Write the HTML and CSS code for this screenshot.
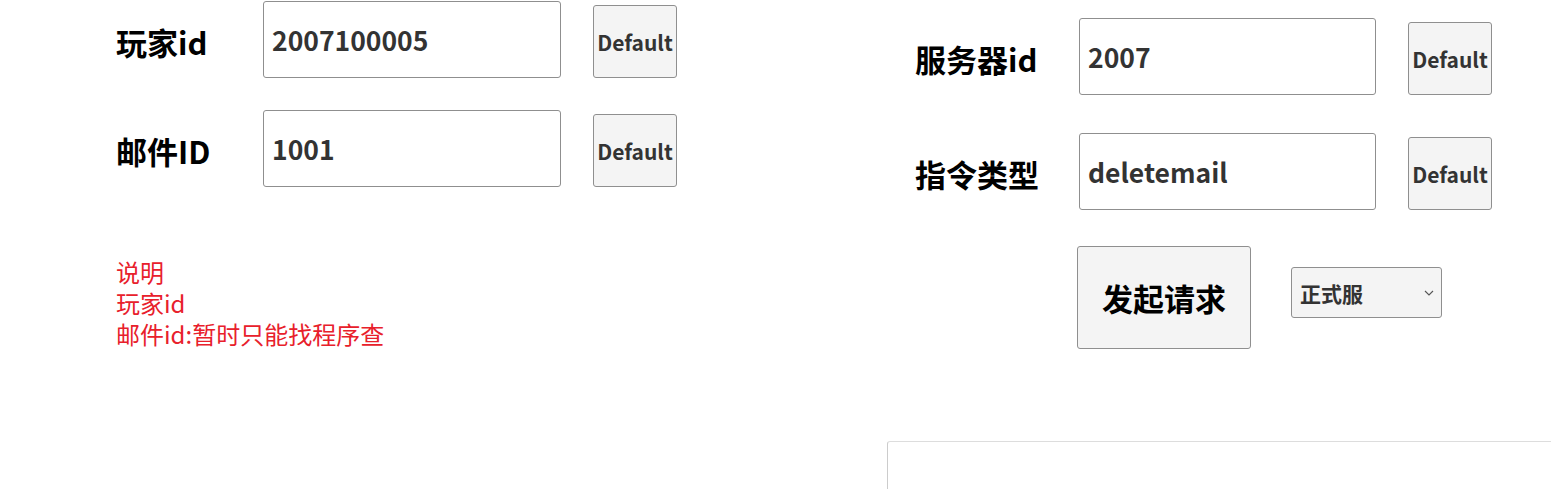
FILE: index.html
```html
<!DOCTYPE html>
<html lang="zh-CN">
<head>
<meta charset="utf-8">
<title>邮件删除</title>
<link rel="stylesheet" href="styles.css">
</head>
<body>
<div class="page">
  <section class="left">
    <div class="row">
      <label class="lbl">玩家id</label>
      <input class="field" type="text" value="2007100005">
      <button class="def">Default</button>
    </div>
    <div class="row">
      <label class="lbl">邮件ID</label>
      <input class="field" type="text" value="1001">
      <button class="def">Default</button>
    </div>
    <div class="note">
      <div class="note-line">说明</div>
      <div class="note-line">玩家id</div>
      <div class="note-line">邮件id:暂时只能找程序查</div>
    </div>
  </section>
  <section class="right">
    <div class="rows">
      <div class="row">
        <label class="lbl lbl-r">服务器id</label>
        <input class="field field-r" type="text" value="2007">
        <button class="def">Default</button>
      </div>
      <div class="row">
        <label class="lbl lbl-r">指令类型</label>
        <input class="field field-r" type="text" value="deletemail">
        <button class="def">Default</button>
      </div>
      <div class="actions">
        <button class="submit">发起请求</button>
        <div class="sel-wrap">
          <select class="sel"><option>正式服</option><option>测试服</option></select>
          <svg class="chev" width="10" height="6" viewBox="0 0 10 6"><path d="M1 1 L5 5 L9 1" fill="none" stroke="#555" stroke-width="1.1"/></svg>
        </div>
      </div>
    </div>
    <div class="result"></div>
  </section>
</div>
</body>
</html>
```

FILE: styles.css
```css
* { box-sizing: border-box; }
html, body { margin: 0; padding: 0; background: #fff; }
body {
  font-family: "Noto Sans CJK SC", "Noto Sans", sans-serif;
  width: 1551px;
  height: 489px;
  overflow: hidden;
}
.page {
  display: flex;
  align-items: flex-start;
}
.left {
  width: 887px;
  flex: none;
  padding: 1px 0 0 116px;
  display: flex;
  flex-direction: column;
  gap: 32px;
}
.right {
  flex: 1;
  display: flex;
  flex-direction: column;
  padding-top: 18px;
}
.rows {
  padding-left: 28px;
  display: flex;
  flex-direction: column;
  gap: 38px;
}
.row {
  display: flex;
  align-items: flex-end;
}
.lbl {
  width: 147px;
  flex: none;
  font-size: 31px;
  font-weight: 700;
  color: #000;
  line-height: 1;
  margin-bottom: 21px;
}
.lbl-r { width: 164px; }
.field {
  width: 298px;
  height: 77px;
  flex: none;
  border: 1px solid #8f8f8f;
  border-radius: 3px;
  padding: 0 8px;
  font-family: "Noto Sans CJK SC", "Noto Sans", sans-serif;
  font-size: 26.5px;
  font-weight: 700;
  color: #333;
  background: #fff;
  outline: none;
}
.field-r { width: 297px; }
.def {
  margin-left: 32px;
  width: 84px;
  height: 73px;
  flex: none;
  padding: 0;
  border: 1px solid #8f8f8f;
  border-radius: 3px;
  background: #f4f4f4;
  font-family: "Noto Sans CJK SC", "Noto Sans", sans-serif;
  font-size: 21px;
  font-weight: 700;
  color: #333;
}
.note {
  margin-top: 37px;
  display: flex;
  flex-direction: column;
  color: #e8202b;
}
.note-line {
  height: 31px;
  font-size: 24px;
  line-height: 31px;
  white-space: nowrap;
}
.actions {
  display: flex;
  align-items: flex-start;
  margin-top: -2px;
  padding-left: 162px;
}
.submit {
  width: 174px;
  height: 103px;
  flex: none;
  border: 1px solid #8f8f8f;
  border-radius: 3px;
  background: #f4f4f4;
  font-family: "Noto Sans CJK SC", "Noto Sans", sans-serif;
  font-size: 31px;
  font-weight: 700;
  color: #000;
  padding: 0;
}
.sel-wrap {
  position: relative;
  margin: 21px 0 0 40px;
}
.sel {
  -webkit-appearance: none;
  appearance: none;
  width: 151px;
  height: 51px;
  border: 1px solid #8f8f8f;
  border-radius: 3px;
  background: #f4f4f4;
  padding: 0 8px;
  font-family: "Noto Sans CJK SC", "Noto Sans", sans-serif;
  font-size: 21px;
  font-weight: 700;
  color: #333;
  outline: none;
}
.chev {
  position: absolute;
  right: 8px;
  top: 23px;
  pointer-events: none;
}
.result {
  margin-top: 92px;
  height: 60px;
  border-top: 1px solid #ddd;
  border-left: 1px solid #ccc;
  border-top-left-radius: 3px;
}
```
